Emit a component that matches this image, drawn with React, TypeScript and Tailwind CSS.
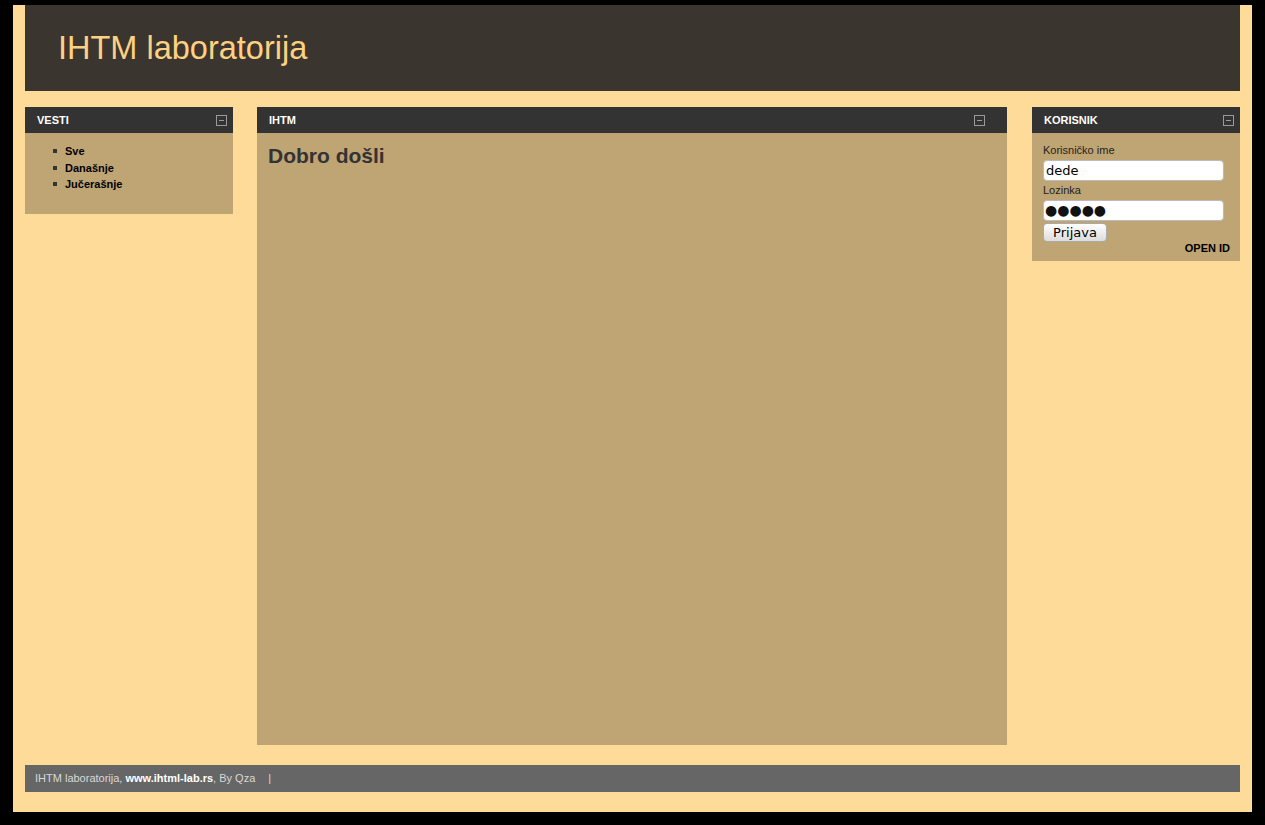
import React from 'react';

function MinBox() {
  return (
    <span className="flex h-[11px] w-[11px] items-center justify-center border border-[#9a9a9a]">
      <span className="block h-px w-[5px] bg-[#9a9a9a]" />
    </span>
  );
}

function PanelHead({title, pad = 'pr-[6px]'}: {title: string; pad?: string}) {
  return (
    <div className={`flex h-[26px] items-center justify-between bg-[#333333] pl-3 ${pad}`}>
      <span className="text-[11px] font-bold text-white">{title}</span>
      <MinBox />
    </div>
  );
}

export default function App() {
  return (
    <div className="min-h-[825px] bg-black px-[13px] pt-[5px] font-['Liberation_Sans',Arial,sans-serif]">
      <div className="bg-[#ffdb9a] px-3 pb-5">
        <header className="flex h-[86px] items-center bg-[#3b352f] pl-[33px]">
          <h1 className="text-[32.5px] leading-none text-[#fdd181]">IHTM laboratorija</h1>
        </header>

        <div className="mt-4 flex items-start">
          <section className="mr-6 w-[208px]">
            <PanelHead title="VESTI" />
            <div className="h-[81px] bg-[#bfa474] pl-7 pt-[10px]">
              <ul className="text-[11px] font-bold leading-[16.5px] text-black">
                {['Sve', 'Današnje', 'Jučerašnje'].map((t) => (
                  <li key={t} className="flex items-center">
                    <span className="mr-[8px] block h-1 w-1 bg-[#333]" />
                    {t}
                  </li>
                ))}
              </ul>
            </div>
          </section>

          <section className="mr-[25px] w-[750px]">
            <PanelHead title="IHTM" pad="pr-[22px]" />
            <div className="h-[612px] bg-[#bfa474] px-[11px] pt-[11px]">
              <h2 className="text-[21px] font-bold leading-6 text-[#333]">Dobro došli</h2>
            </div>
          </section>

          <section className="w-[208px]">
            <PanelHead title="KORISNIK" />
            <div className="flex h-[128px] flex-col bg-[#bfa474] pl-[11px] pr-[10px] pt-[10px]">
              <label className="text-[11px] leading-[14px] text-[#222]">Korisničko ime</label>
              <input
                readOnly
                value="dede"
                className="mt-[3px] h-[21px] w-[181px] rounded-[4px] border border-[#bbb] bg-white px-[2px] font-['DejaVu_Sans',sans-serif] text-[13px] text-black outline-none"
              />
              <label className="mt-[2px] text-[11px] leading-[14px] text-[#222]">Lozinka</label>
              <input
                readOnly
                value="●●●●●"
                className="mt-[3px] h-[21px] w-[181px] rounded-[4px] border border-[#bbb] bg-white px-[1px] font-['DejaVu_Sans',sans-serif] text-[14px] text-[#111] outline-none"
              />
              <button className="mt-[2px] h-[19px] w-[64px] rounded-[4px] border border-[#aaa] bg-gradient-to-b from-white to-[#dcdcdc] font-['DejaVu_Sans',sans-serif] text-[13px] leading-none text-black">
                Prijava
              </button>
              <div className="text-right text-[11px] font-bold leading-[12px] text-black">OPEN ID</div>
            </div>
          </section>
        </div>

        <footer className="mt-5 flex h-[27px] items-center bg-[#666666] pl-[10px] text-[11px] text-[#d8d8d8]">
          <span>
            IHTM laboratorija, <b className="text-white">www.ihtml-lab.rs</b>, By Qza
          </span>
          <span className="ml-[13px]">|</span>
        </footer>
      </div>
    </div>
  );
}
